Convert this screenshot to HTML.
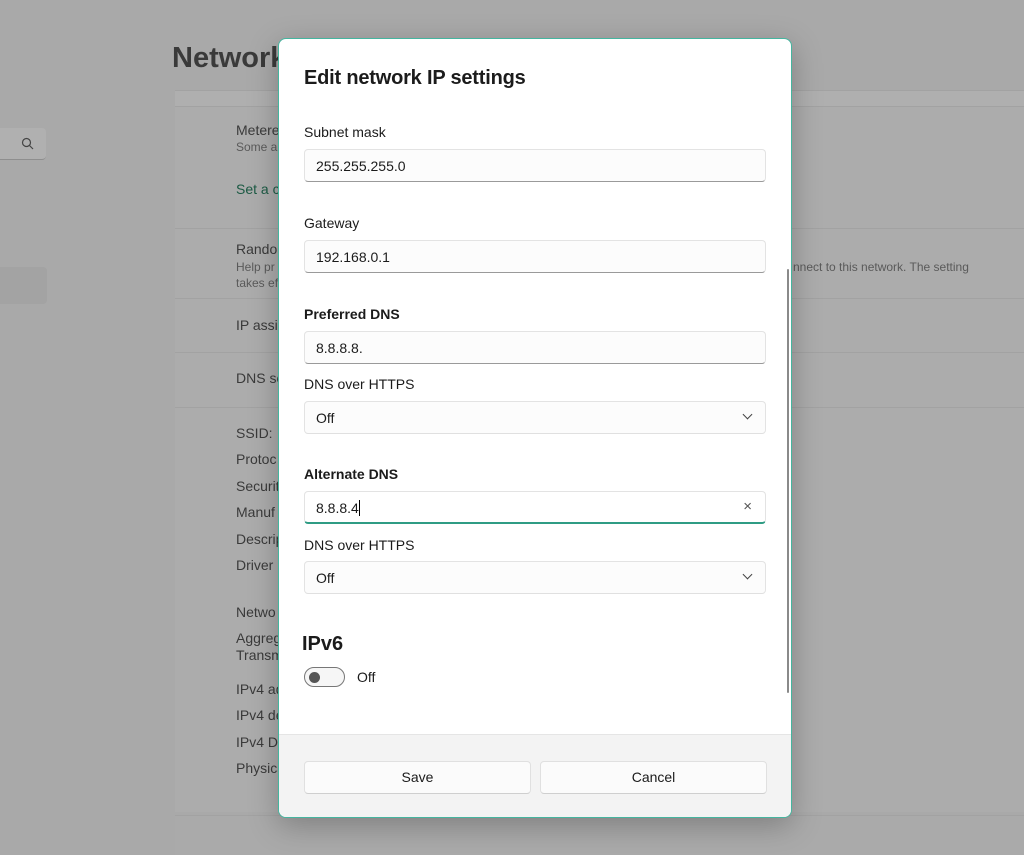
<!DOCTYPE html>
<html><head><style>
*{box-sizing:border-box;margin:0;padding:0}
html,body{width:1024px;height:847px}
body{background:#a9a9a9;font-family:"Liberation Sans",sans-serif;position:relative;overflow:hidden;color:#1b1b1b}
.abs{position:absolute}
.bg{color:#3a3a3a;font-size:14px}
.sub{color:#5a5a5a;font-size:12px}
.card{position:absolute;left:175px;right:0;background:#acacac;border-top:1px solid #a2a2a2}
.dlg{position:absolute;left:278px;top:38px;width:514px;height:780px;background:#fff;border:1.5px solid #45b59f;border-radius:8px;overflow:hidden;box-shadow:0 8px 30px rgba(0,0,0,.25)}
.lbl{position:absolute;left:25px;font-size:14px;color:#1b1b1b}
.b{font-weight:bold}
.inp{position:absolute;left:25px;width:462px;height:33px;border:1px solid #e3e3e3;border-bottom:1px solid #9a9a9a;border-radius:4px;background:#fcfcfc;font-size:14px;padding:8px 11px;color:#1b1b1b}
.foot{position:absolute;left:0;right:0;top:695px;bottom:0;background:#f3f3f3;border-top:1px solid #e5e5e5}
.btn{position:absolute;top:26px;width:227px;height:33px;background:#fbfbfb;border:1px solid #e0e0e0;border-bottom-color:#cfcfcf;border-radius:4px;font-size:14px;text-align:center;line-height:31px}
.chev{position:absolute;right:14px;top:9px;width:7px;height:7px;border-right:1.3px solid #444;border-bottom:1.3px solid #444;transform:rotate(45deg)}
</style></head><body>
<div class="abs" style="left:172px;top:42px;font-size:29px;font-weight:bold;color:#3a3a3a">Network</div>
<div class="abs" style="left:-5px;top:128px;width:51px;height:32px;background:#b0b0b0;border-radius:4px;border-bottom:1px solid #8e8e8e"></div>
<svg class="abs" style="left:21px;top:137px" width="13" height="13" viewBox="0 0 13 13"><circle cx="5.5" cy="5.5" r="4" fill="none" stroke="#444" stroke-width="1.2"/><path d="M8.5 8.5L12 12" stroke="#444" stroke-width="1.2"/></svg>
<div class="abs" style="left:-5px;top:267px;width:52px;height:37px;background:#a3a3a3;border-radius:4px"></div>
<div class="card" style="top:90px;height:16px;background:#afafaf"></div>
<div class="card" style="top:106px;height:122px"></div>
<div class="card" style="top:228px;height:70px"></div>
<div class="card" style="top:298px;height:54px"></div>
<div class="card" style="top:352px;height:55px"></div>
<div class="card" style="top:407px;height:405px"></div>
<div class="card" style="top:815px;height:40px;background:#aaa"></div>
<div class="abs bg" style="left:236px;top:122px">Metered</div>
<div class="abs sub" style="left:236px;top:140px">Some a</div>
<div class="abs" style="left:236px;top:181px;font-size:14px;color:#1c5a44">Set a c</div>
<div class="abs bg" style="left:236px;top:241px">Random</div>
<div class="abs sub" style="left:236px;top:260px">Help pr</div>
<div class="abs sub" style="left:236px;top:276px">takes ef</div>
<div class="abs sub" style="left:793px;top:260px">nnect to this network. The setting</div>
<div class="abs bg" style="left:236px;top:317px">IP assig</div>
<div class="abs bg" style="left:236px;top:370px">DNS se</div>
<div class="abs bg" style="left:236px;top:420px;line-height:26.4px">SSID:<br>Protoc<br>Securit<br>Manuf<br>Descrip<br>Driver</div>
<div class="abs bg" style="left:236px;top:604px;line-height:17px">Netwo</div>
<div class="abs bg" style="left:236px;top:630px;line-height:17px">Aggreg<br>Transm</div>
<div class="abs bg" style="left:236px;top:676px;line-height:26.4px">IPv4 ad<br>IPv4 de<br>IPv4 D<br>Physica</div>

<div class="dlg">
<div class="abs" style="left:25px;top:28px;font-size:20px;font-weight:bold;color:#1b1b1b;letter-spacing:-.2px">Edit network IP settings</div>
<div class="lbl" style="top:85px">Subnet mask</div>
<div class="inp" style="top:110px">255.255.255.0</div>
<div class="lbl" style="top:176px">Gateway</div>
<div class="inp" style="top:201px">192.168.0.1</div>
<div class="lbl b" style="top:267px">Preferred DNS</div>
<div class="inp" style="top:292px">8.8.8.8.</div>
<div class="lbl" style="top:337px">DNS over HTTPS</div>
<div class="inp" style="top:362px;border-bottom-color:#e0e0e0">Off<span class="chev"></span></div>
<div class="lbl b" style="top:427px">Alternate DNS</div>
<div class="inp" style="top:452px;border-bottom:2px solid #2f9c84;background:#fff">8.8.8.4<span style="display:inline-block;width:1px;height:16px;background:#000;vertical-align:-3px"></span><span style="position:absolute;right:13px;top:6px;font-size:15px;color:#555">×</span></div>
<div class="lbl" style="top:498px">DNS over HTTPS</div>
<div class="inp" style="top:522px;border-bottom-color:#e0e0e0">Off<span class="chev"></span></div>
<div class="abs" style="left:23px;top:594px;font-size:20px;font-weight:bold">IPv6</div>
<div class="abs" style="left:25px;top:628px;width:41px;height:20px;border:1px solid #777;border-radius:10px;background:#f6f6f6"><div style="position:absolute;left:4px;top:4px;width:11px;height:11px;border-radius:50%;background:#555"></div></div>
<div class="abs" style="left:78px;top:630px;font-size:14px">Off</div>
<div class="abs" style="left:508px;top:230px;width:2px;height:424px;background:#8a8a8a;border-radius:1px"></div>
<div class="foot">
<div class="btn" style="left:25px">Save</div>
<div class="btn" style="left:261px">Cancel</div>
</div>
</div>
</body></html>
